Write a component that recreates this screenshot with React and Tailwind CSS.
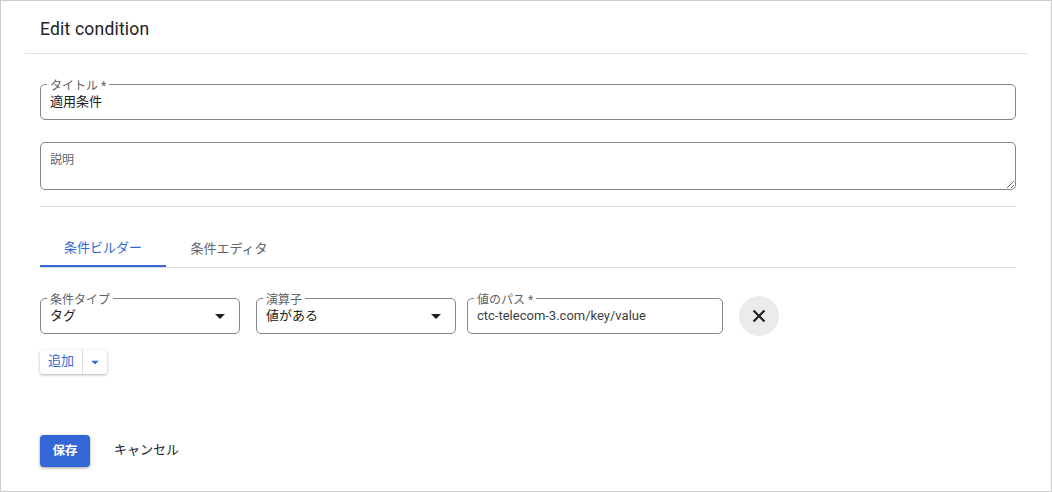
const font = { fontFamily: '"Roboto", "Noto Sans CJK JP", sans-serif' };

function Field({ label, className, children }) {
  return (
    <div className={`relative flex items-center rounded-[5px] border border-[#80868b] ${className}`}>
      <span className="absolute -top-[5px] left-[6px] h-[11px] bg-white px-[3px] text-[12px] leading-[12px] text-[#5f6368]">{label}</span>
      {children}
    </div>
  );
}

function Caret({ className }) {
  return (
    <svg width="10" height="5" viewBox="0 0 10 5" className={className}>
      <path d="M0 0h10L5 5z" fill="currentColor" />
    </svg>
  );
}

export default function App() {
  return (
    <div className="h-[492px] w-[1052px] overflow-hidden border border-[#cccccc] bg-white text-[#202124]" style={font}>
      <header className="mx-[24px] flex h-[53px] items-center border-b border-[#e0e0e0] pl-[15px]">
        <h1 className="mt-[5px] text-[17.5px] font-normal tracking-[0.2px]">Edit condition</h1>
      </header>

      <div className="ml-[39px] w-[976px]">
        <Field label="タイトル *" className="mt-[30px] h-[36px] pl-[9px]">
          <span className="mt-[2px] mb-[2px] text-[13px] leading-[16px]">適用条件</span>
        </Field>

        <textarea
          placeholder="説明"
          className="mt-[22px] block h-[48px] w-full rounded-[5px] border border-[#80868b] px-[9px] py-[9px] text-[12px] leading-[16px] outline-none placeholder:text-[#5f6368]"
        />

        <div className="mt-[16px] border-t border-[#e0e0e0]" />

        <div className="mt-[21px] flex h-[40px] border-b border-[#e0e0e0] text-[13px]">
          <div className="flex w-[126px] items-center justify-center border-b-2 border-[#3367d6] pt-[2px] text-[#3367d6]">条件ビルダー</div>
          <div className="flex w-[126px] items-center justify-center pt-[2px] text-[#5f6368]">条件エディタ</div>
        </div>

        <div className="mt-[28px] flex items-center">
          <Field label="条件タイプ" className="h-[36px] w-[200px] justify-between pl-[9px] pr-[14px]">
            <span className="text-[13px] leading-[16px]">タグ</span>
            <Caret className="text-[#202124]" />
          </Field>
          <Field label="演算子" className="ml-[16px] h-[36px] w-[200px] justify-between pl-[9px] pr-[14px]">
            <span className="text-[13px] leading-[16px]">値がある</span>
            <Caret className="text-[#202124]" />
          </Field>
          <Field label="値のパス *" className="ml-[11px] h-[36px] w-[256px] pl-[9px]">
            <span className="text-[13px] leading-[16px] text-[#3c4043]">ctc-telecom-3.com/key/value</span>
          </Field>
          <button className="ml-[16px] flex h-[40px] w-[40px] items-center justify-center rounded-full bg-[#ebebeb]">
            <svg width="14" height="14" viewBox="0 0 14 14">
              <path d="M1.5 1.5l11 11M12.5 1.5l-11 11" stroke="#202124" strokeWidth="2.2" />
            </svg>
          </button>
        </div>

        <div className="mt-[14px] flex h-[24px] w-[67px] items-center rounded-[3px] bg-white text-[13px] text-[#3367d6] shadow-[0_1px_3px_rgba(60,64,67,0.4)]">
          <span className="flex h-full w-[43px] items-center justify-center border-r border-[#dadce0] pb-[2px]">追加</span>
          <span className="flex flex-1 items-center justify-center">
            <Caret className="scale-[0.8]" />
          </span>
        </div>

        <div className="mt-[61px] flex items-center">
          <button className="h-[32px] w-[50px] rounded-[4px] bg-[#3367d6] text-[12.5px] font-bold text-white shadow-[0_1px_3px_rgba(60,64,67,0.5)]">保存</button>
          <button className="mb-[2px] ml-[24px] text-[13px] text-[#202124]">キャンセル</button>
        </div>
      </div>
    </div>
  );
}
